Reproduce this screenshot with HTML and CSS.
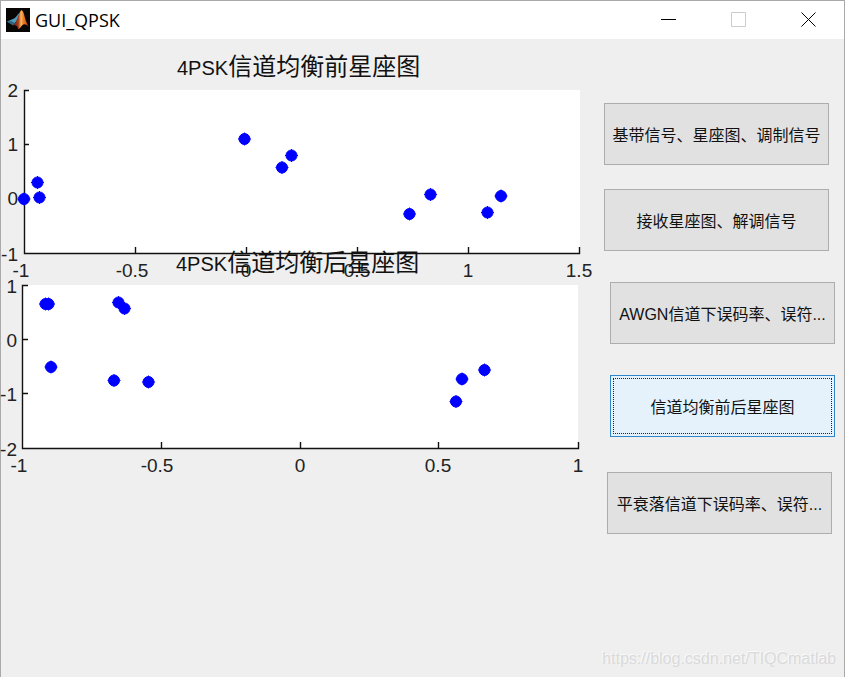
FILE: index.html
```html
<!DOCTYPE html>
<html lang="zh-CN">
<head>
  <meta charset="UTF-8">
  <title>GUI_QPSK</title>
  <link rel="stylesheet" href="styles.css">
</head>
<body>
  <div class="window">
    <header class="titlebar">
      <svg class="logo" viewBox="0 0 24 24" aria-hidden="true">
        <defs>
          <linearGradient id="flame" x1="0" y1="0" x2="1" y2="0">
            <stop offset="0" stop-color="#5c1c10"/>
            <stop offset="0.35" stop-color="#a8401c"/>
            <stop offset="0.52" stop-color="#f8b860"/>
            <stop offset="0.68" stop-color="#ee7a22"/>
            <stop offset="1" stop-color="#b5400f"/>
          </linearGradient>
        </defs>
        <rect width="24" height="24" fill="#080605"/>
        <path d="M1 13.5 L7 11 C10 10 11 7 14 4 L11 13 L7 17 Z" fill="#4d9dbb"/>
        <path d="M1 13.5 L5 13 L9 15 L7 17.5 Z" fill="#2c6683"/>
        <path d="M7 17.5 C10 15 12 8 14.5 3 C15.5 1 17 3 18 6 C19 11 20.500 15 22.500 18.500 C20 16 18 15.500 16 17.500 C14.500 19 14 21 12 21 C12 18.500 10 16.500 7 17.500 Z" fill="url(#flame)"/>
      </svg>
      <h1 class="caption">GUI_QPSK</h1>
      <div class="controls">
        <button type="button" class="control" aria-label="最小化">
          <svg class="glyph" viewBox="0 0 16 16"><path d="M0 7.5H15"/></svg>
        </button>
        <button type="button" class="control" aria-label="最大化" disabled>
          <svg class="glyph" viewBox="0 0 16 16"><path d="M0.5 0.5H14.5V14.5H0.5Z"/></svg>
        </button>
        <button type="button" class="control" aria-label="关闭">
          <svg class="glyph" viewBox="0 0 16 16"><path d="M0.5 0.5L14.5 14.5M14.5 0.5L0.5 14.5"/></svg>
        </button>
      </div>
    </header>

    <main class="content">
      <div class="plots">
        <svg class="plot" viewBox="0 0 603 246">
          <defs>
            <g id="dot">
              <circle r="5.5"/>
              <path d="M-6.5 0H6.5M0 -6.5V6.5"/>
            </g>
          </defs>
          <rect class="area" x="23" y="51" width="556" height="164"/>
          <path class="axis" d="M28 51.5H23.5V214.5H578.5V208M23.5 105.5H28M23.5 159.5H28M134.5 214.5V208M245.5 214.5V208M356.5 214.5V208M467.5 214.5V208"/>
          <g class="tick y">
            <text x="17" y="58">2</text>
            <text x="17" y="112">1</text>
            <text x="17" y="166">0</text>
            <text x="17" y="222">-1</text>
          </g>
          <g class="tick">
            <text x="20" y="238">-1</text>
            <text x="131" y="238">-0.5</text>
            <text x="245" y="238">0</text>
            <text x="356" y="238">0.5</text>
            <text x="467" y="238">1</text>
            <text x="578" y="238">1.5</text>
          </g>
          <g class="dots">
            <use href="#dot" x="23" y="160"/>
            <use href="#dot" x="36.5" y="143.5"/>
            <use href="#dot" x="38.5" y="158.5"/>
            <use href="#dot" x="243.5" y="100"/>
            <use href="#dot" x="281" y="128.5"/>
            <use href="#dot" x="290.5" y="116.5"/>
            <use href="#dot" x="408.5" y="175"/>
            <use href="#dot" x="429.5" y="155.5"/>
            <use href="#dot" x="486.5" y="173.5"/>
            <use href="#dot" x="500" y="157"/>
          </g>
          <text class="title" x="176" y="36">4PSK<tspan class="han">信道均衡前星座图</tspan></text>
        </svg>

        <svg class="plot" viewBox="0 0 603 195">
          <rect class="area" x="21" y="0" width="556" height="164"/>
          <path class="axis" d="M27 0.5H21.5V163.5H577.5V157M21.5 54.5H27M21.5 108.5H27M160.5 163.5V157M299.5 163.5V157M437.5 163.5V157"/>
          <g class="tick y">
            <text x="16" y="8">1</text>
            <text x="16" y="62">0</text>
            <text x="16" y="116">-1</text>
            <text x="16" y="171">-2</text>
          </g>
          <g class="tick">
            <text x="18" y="187">-1</text>
            <text x="156" y="187">-0.5</text>
            <text x="299" y="187">0</text>
            <text x="437" y="187">0.5</text>
            <text x="577" y="187">1</text>
          </g>
          <g class="dots">
            <use href="#dot" x="44.5" y="19"/>
            <use href="#dot" x="47.5" y="19"/>
            <use href="#dot" x="117.5" y="17.5"/>
            <use href="#dot" x="123.5" y="23.5"/>
            <use href="#dot" x="50" y="82"/>
            <use href="#dot" x="113" y="95.5"/>
            <use href="#dot" x="147.5" y="97"/>
            <use href="#dot" x="455" y="116.5"/>
            <use href="#dot" x="461" y="94"/>
            <use href="#dot" x="483.5" y="85"/>
          </g>
          <!-- title sits above the axes, over the upper plot's labels -->
          <text class="title" x="175" y="-14">4PSK<tspan class="han">信道均衡后星座图</tspan></text>
        </svg>
      </div>

      <div class="actions">
        <div class="pair">
          <button type="button" class="action">基带信号、星座图、调制信号</button>
          <button type="button" class="action">接收星座图、解调信号</button>
        </div>
        <button type="button" class="action right">AWGN信道下误码率、误符...</button>
        <button type="button" class="action right active">信道均衡前后星座图</button>
        <button type="button" class="action center last">平衰落信道下误码率、误符...</button>
      </div>
    </main>

    <footer class="watermark">https://blog.csdn.net/TIQCmatlab</footer>
  </div>
</body>
</html>
```

FILE: styles.css
```css
* { box-sizing: border-box; }
body {
  margin: 0;
  font-family: "Liberation Sans", "Noto Sans CJK SC", sans-serif;
  color: #111;
}
button {
  font-family: inherit;
  color: inherit;
  padding: 0;
}
.window {
  display: flex;
  flex-direction: column;
  min-height: 100vh;
  background: #efefef;
  border: 1px solid #a9a9a9;
  border-bottom: none;
}

/* title bar */
.titlebar {
  display: flex;
  align-items: center;
  height: 38px;
  padding-left: 5px;
  background: #fff;
}
.logo {
  width: 24px;
  height: 24px;
}
.caption {
  flex: 1;
  margin: 0 0 0 5px;
  font-family: "Open Sans", sans-serif;
  font-size: 18px;
  line-height: 22px;
  font-weight: normal;
  color: #000;
}
.controls { display: flex; }
.control {
  display: flex;
  align-items: center;
  justify-content: center;
  width: 70px;
  height: 38px;
  border: none;
  background: none;
}
.control:hover { background: #e5e5e5; }
.control:disabled { background: none; }
.glyph {
  width: 16px;
  height: 16px;
  fill: none;
  stroke: #000;
}
.control:disabled .glyph { stroke: #ccc; }

/* plots */
.content {
  display: grid;
  grid-template-columns: minmax(0, 1fr) 231px;
  padding-right: 9px;
}
.plot {
  display: block;
  width: 100%;
  overflow: visible;
}
.area { fill: #fff; }
.axis {
  fill: none;
  stroke: #111;
  stroke-width: 1.4;
}
.tick {
  font-size: 19px;
  text-anchor: middle;
  fill: #222;
}
.tick.y { text-anchor: end; }
.title {
  font-size: 20px;
  fill: #111;
}
.han { font-size: 24px; }
.dots {
  fill: #00f;
  stroke: #00f;
  stroke-width: 1;
}

/* push buttons */
.actions {
  display: flex;
  flex-direction: column;
  gap: 31px;
  padding-top: 64px;
}
.pair {
  display: flex;
  flex-direction: column;
  gap: 24px;
}
.action {
  width: 225px;
  height: 62px;
  border: 1px solid #adadad;
  background: #e1e1e1;
  font-size: 16px;
  white-space: nowrap;
}
.right { align-self: flex-end; }
.center { align-self: center; }
.last { margin-top: 4px; }
.active {
  border-color: #2f86cb;
  background: #e5f1fb;
  outline: 1px dotted #222;
  outline-offset: -4px;
}
.action:hover { background: #e5f1fb; }

.watermark {
  margin-top: auto;
  padding: 0 8px 8px;
  text-align: right;
  font-size: 16px;
  line-height: 20px;
  color: #dadada;
  text-shadow: -1px -1px #fafafa;
}
```
